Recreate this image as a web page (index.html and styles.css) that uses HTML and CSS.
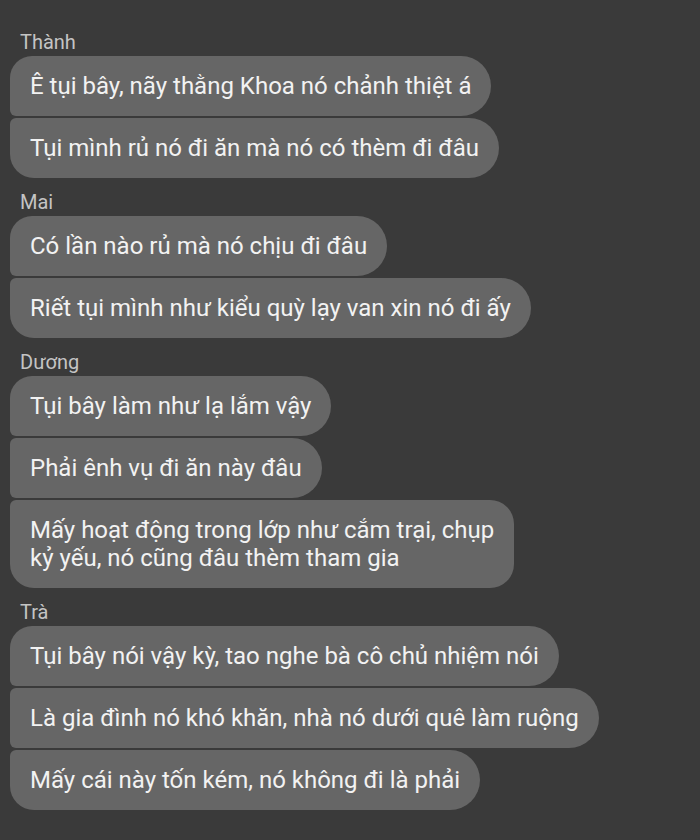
FILE: index.html
```html
<!DOCTYPE html>
<html lang="vi">
<head>
<meta charset="utf-8">
<link rel="stylesheet" href="styles.css">
</head>
<body>
<div class="chat">
  <div class="group">
    <div class="name">Thành</div>
    <div class="bubble">Ê tụi bây, nãy thằng Khoa nó chảnh thiệt á</div>
    <div class="bubble">Tụi mình rủ nó đi ăn mà nó có thèm đi đâu</div>
  </div>
  <div class="group">
    <div class="name">Mai</div>
    <div class="bubble">Có lần nào rủ mà nó chịu đi đâu</div>
    <div class="bubble">Riết tụi mình như kiểu quỳ lạy van xin nó đi ấy</div>
  </div>
  <div class="group">
    <div class="name">Dương</div>
    <div class="bubble">Tụi bây làm như lạ lắm vậy</div>
    <div class="bubble">Phải ênh vụ đi ăn này đâu</div>
    <div class="bubble multi">Mấy hoạt động trong lớp như cắm trại, chụp<br>kỷ yếu, nó cũng đâu thèm tham gia</div>
  </div>
  <div class="group">
    <div class="name">Trà</div>
    <div class="bubble">Tụi bây nói vậy kỳ, tao nghe bà cô chủ nhiệm nói</div>
    <div class="bubble">Là gia đình nó khó khăn, nhà nó dưới quê làm ruộng</div>
    <div class="bubble">Mấy cái này tốn kém, nó không đi là phải</div>
  </div>
</div>
</body>
</html>
```
FILE: styles.css
```css
html, body {
  margin: 0;
  padding: 0;
  background: #3a3a3a;
}
body {
  width: 700px;
  height: 840px;
  overflow: hidden;
  font-family: Roboto, "Noto Sans", sans-serif;
}
.chat {
  display: flex;
  flex-direction: column;
  gap: 12px;
  padding: 30px 10px 0 10px;
}
.group {
  display: flex;
  flex-direction: column;
  align-items: flex-start;
  gap: 2px;
}
.name {
  color: #c4c4c4;
  font-size: 20px;
  line-height: 24px;
  padding-left: 10px;
}
.bubble {
  background: #666666;
  color: #f2f2f2;
  font-size: 24px;
  line-height: 28px;
  padding: 16px 20px;
  border-radius: 6px 30px 30px 6px;
}
.bubble.multi {
  border-radius: 6px 24px 24px 6px;
}
.group .bubble:nth-child(2) {
  border-top-left-radius: 22px;
}
.group .bubble:last-child {
  border-bottom-left-radius: 24px;
}
```
